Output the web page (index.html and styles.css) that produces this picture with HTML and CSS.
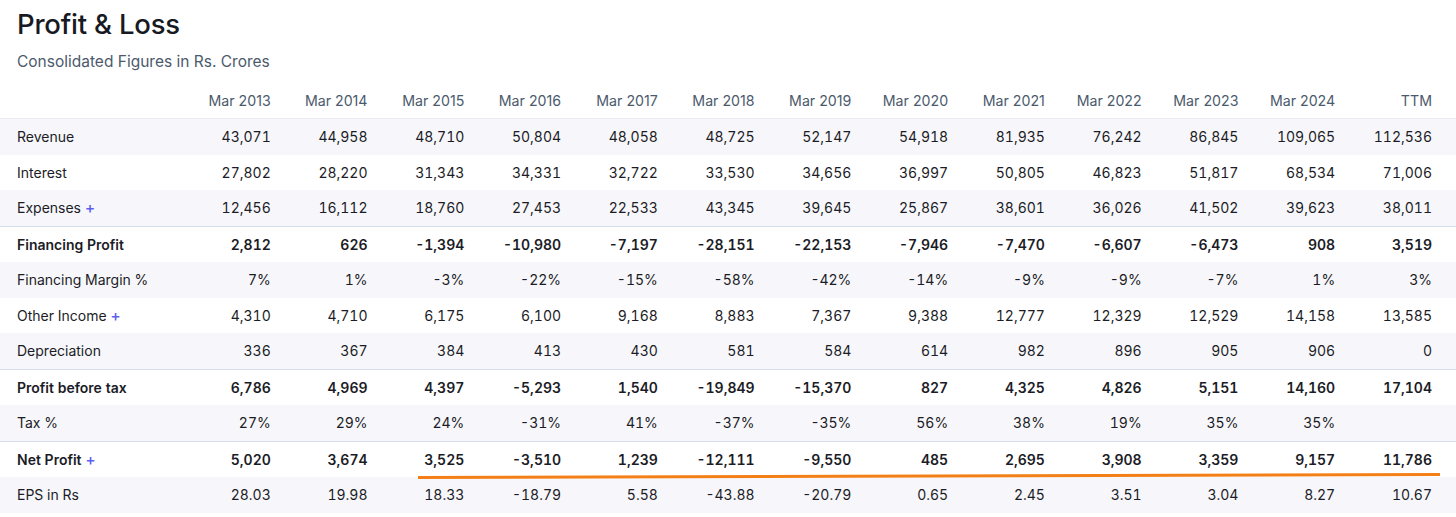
FILE: index.html
```html
<!DOCTYPE html>
<html lang="en">
<head>
<meta charset="utf-8">
<title>Profit &amp; Loss</title>
<link rel="stylesheet" href="styles.css">
</head>
<body>
<section class="pl">
  <h1 class="pl-title">Profit &amp; Loss</h1>
  <p class="pl-sub">Consolidated Figures in Rs. Crores</p>
  <div class="table-wrap">
    <table class="data">
      <colgroup>
        <col class="c-label">
        <col><col><col><col><col><col><col><col><col><col><col><col><col>
      </colgroup>
      <thead>
        <tr>
          <th class="label"></th>
          <th>Mar 2013</th><th>Mar 2014</th><th>Mar 2015</th><th>Mar 2016</th><th>Mar 2017</th><th>Mar 2018</th><th>Mar 2019</th><th>Mar 2020</th><th>Mar 2021</th><th>Mar 2022</th><th>Mar 2023</th><th>Mar 2024</th><th>TTM</th>
        </tr>
      </thead>
      <tbody>
        <tr class="stripe">
          <td class="label">Revenue</td>
          <td>43,071</td><td>44,958</td><td>48,710</td><td>50,804</td><td>48,058</td><td>48,725</td><td>52,147</td><td>54,918</td><td>81,935</td><td>76,242</td><td>86,845</td><td>109,065</td><td>112,536</td>
        </tr>
        <tr>
          <td class="label">Interest</td>
          <td>27,802</td><td>28,220</td><td>31,343</td><td>34,331</td><td>32,722</td><td>33,530</td><td>34,656</td><td>36,997</td><td>50,805</td><td>46,823</td><td>51,817</td><td>68,534</td><td>71,006</td>
        </tr>
        <tr class="stripe">
          <td class="label">Expenses<span class="plus">+</span></td>
          <td>12,456</td><td>16,112</td><td>18,760</td><td>27,453</td><td>22,533</td><td>43,345</td><td>39,645</td><td>25,867</td><td>38,601</td><td>36,026</td><td>41,502</td><td>39,623</td><td>38,011</td>
        </tr>
        <tr class="strong sep">
          <td class="label">Financing Profit</td>
          <td>2,812</td><td>626</td><td>-1,394</td><td>-10,980</td><td>-7,197</td><td>-28,151</td><td>-22,153</td><td>-7,946</td><td>-7,470</td><td>-6,607</td><td>-6,473</td><td>908</td><td>3,519</td>
        </tr>
        <tr class="stripe">
          <td class="label">Financing Margin %</td>
          <td>7%</td><td>1%</td><td>-3%</td><td>-22%</td><td>-15%</td><td>-58%</td><td>-42%</td><td>-14%</td><td>-9%</td><td>-9%</td><td>-7%</td><td>1%</td><td>3%</td>
        </tr>
        <tr>
          <td class="label">Other Income<span class="plus">+</span></td>
          <td>4,310</td><td>4,710</td><td>6,175</td><td>6,100</td><td>9,168</td><td>8,883</td><td>7,367</td><td>9,388</td><td>12,777</td><td>12,329</td><td>12,529</td><td>14,158</td><td>13,585</td>
        </tr>
        <tr class="stripe">
          <td class="label">Depreciation</td>
          <td>336</td><td>367</td><td>384</td><td>413</td><td>430</td><td>581</td><td>584</td><td>614</td><td>982</td><td>896</td><td>905</td><td>906</td><td>0</td>
        </tr>
        <tr class="strong sep">
          <td class="label">Profit before tax</td>
          <td>6,786</td><td>4,969</td><td>4,397</td><td>-5,293</td><td>1,540</td><td>-19,849</td><td>-15,370</td><td>827</td><td>4,325</td><td>4,826</td><td>5,151</td><td>14,160</td><td>17,104</td>
        </tr>
        <tr class="stripe">
          <td class="label">Tax %</td>
          <td>27%</td><td>29%</td><td>24%</td><td>-31%</td><td>41%</td><td>-37%</td><td>-35%</td><td>56%</td><td>38%</td><td>19%</td><td>35%</td><td>35%</td><td></td>
        </tr>
        <tr class="strong sep">
          <td class="label">Net Profit<span class="plus">+</span></td>
          <td>5,020</td><td>3,674</td><td>3,525</td><td>-3,510</td><td>1,239</td><td>-12,111</td><td>-9,550</td><td>485</td><td>2,695</td><td>3,908</td><td>3,359</td><td>9,157</td><td>11,786</td>
        </tr>
        <tr class="stripe">
          <td class="label">EPS in Rs</td>
          <td>28.03</td><td>19.98</td><td>18.33</td><td>-18.79</td><td>5.58</td><td>-43.88</td><td>-20.79</td><td>0.65</td><td>2.45</td><td>3.51</td><td>3.04</td><td>8.27</td><td>10.67</td>
        </tr>
      </tbody>
    </table>
    <svg class="annotation" width="1456" height="517" viewBox="0 0 1456 517" aria-hidden="true">
      <line x1="418" y1="477.5" x2="1440" y2="474.5" stroke="#f57f17" stroke-width="3" stroke-linecap="butt"/>
    </svg>
  </div>
</section>
</body>
</html>
```

FILE: styles.css
```css
html, body {
  margin: 0;
  padding: 0;
  background: #ffffff;
}

body {
  font-family: Inter, "Noto Sans", "Liberation Sans", sans-serif;
  color: #1b1c26;
  width: 1456px;
  height: 517px;
  overflow: hidden;
}

.pl {
  padding-top: 6px;
  position: relative;
}

.pl-title {
  margin: 0;
  padding-left: 17px;
  font-size: 27.5px;
  line-height: 36px;
  font-weight: 500;
  color: #171923;
  letter-spacing: -0.2px;
}

.pl-sub {
  margin: 9px 0 0;
  padding-left: 17px;
  font-size: 15.5px;
  line-height: 22px;
  color: #4b5a6c;
}

.table-wrap {
  margin-top: 10px;
}

.data {
  width: 1456px;
  table-layout: fixed;
  border-collapse: collapse;
  font-size: 14px;
}

.data .c-label {
  width: 198px;
}

.data th,
.data td {
  padding: 0 24px 0 0;
  text-align: right;
  white-space: nowrap;
}

.data td {
  font-variant-numeric: tabular-nums;
}

.data th {
  height: 35px;
  font-weight: 400;
  font-size: 14.2px;
  color: #4b5a6c;
  border-bottom: 1px solid #e9edf3;
}

.data td {
  height: 35.5px;
  color: #1b1c26;
}

.data th.label,
.data td.label {
  text-align: left;
  padding-left: 17px;
  padding-right: 0;
}

.data tr.stripe td {
  background: #f7f7fb;
}

.data tr.sep td {
  border-top: 1px solid #d4dfea;
}

.data tr.strong td {
  font-weight: 600;
}

.plus {
  color: #5b5ef0;
  font-weight: 500;
  font-size: 15.5px;
  margin-left: 4px;
}

.annotation {
  position: absolute;
  left: 0;
  top: 0;
  pointer-events: none;
}
```
